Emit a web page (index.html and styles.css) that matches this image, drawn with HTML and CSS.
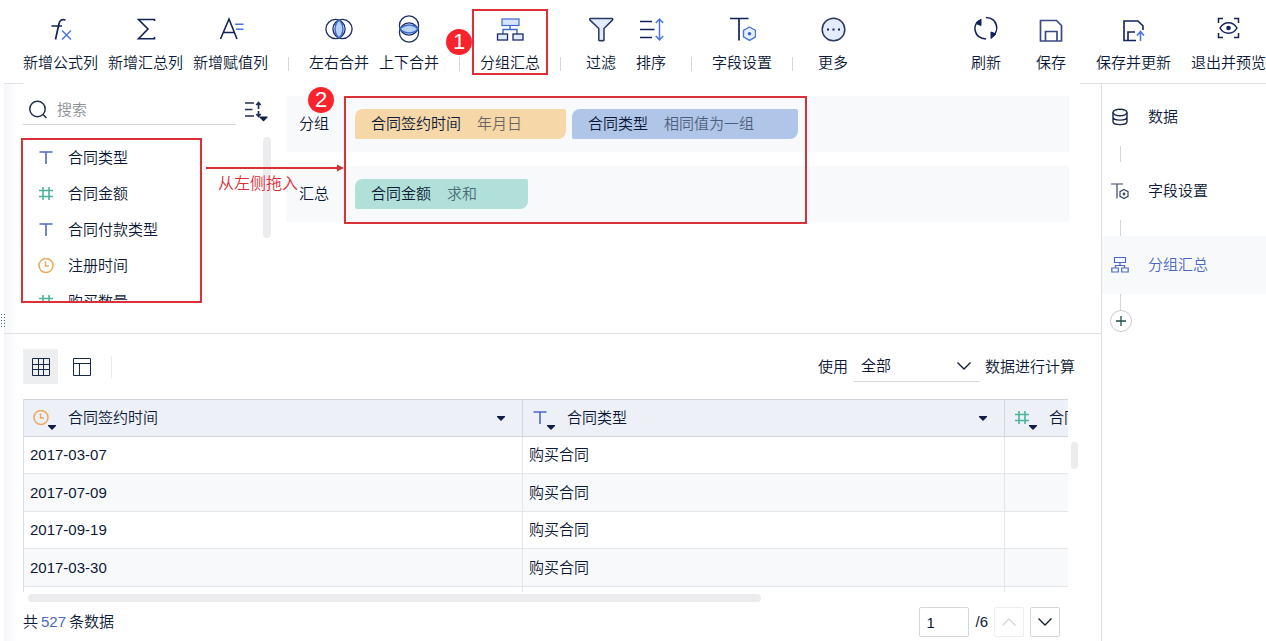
FILE: index.html
```html
<!DOCTYPE html>
<html lang="zh-CN">
<head>
  <meta charset="UTF-8" />
  <meta name="viewport" content="width=device-width, initial-scale=1.0"/>
  <title>分组汇总</title>
  <link rel="stylesheet" href="styles.css">
</head>
<body>
  <!-- Shared icons -->
  <svg class="sprite" aria-hidden="true">
    <symbol id="i-text" viewBox="0 0 16 16"><path d="M1.500 2h13M8 2v12" stroke="#4a69c4" stroke-width="1.600"/></symbol>
    <symbol id="i-num" viewBox="0 0 16 16"><path d="M1 4.500h14M1 10.500h14M5 1v13M11 1v13" stroke="#4bb39c" stroke-width="1.600"/></symbol>
    <symbol id="i-time" viewBox="0 0 16 16"><circle cx="8" cy="7.500" r="7" fill="none" stroke="#eba85c" stroke-width="1.500"/><path d="M7.500 3.500V8H11" fill="none" stroke="#eba85c" stroke-width="1.500"/></symbol>
    <symbol id="i-down" viewBox="0 0 16 16"><path d="M1.500 4.500L8 11l6.500-6.500" fill="none" stroke="currentColor" stroke-width="1.300"/></symbol>
    <symbol id="i-tri" viewBox="0 0 8 5"><path d="M0 0h8v1L4 5 0 1z" fill="#0f1f45"/></symbol>
  </svg>

  <header class="toolbar">
    <button class="tool">
      <svg class="icon" viewBox="0 0 28 28" fill="none"><path d="M18.500 5c-4-1.200-5.800 0-6.700 4.500L8.500 24.500M4.500 11h10.500" stroke="#12235a" stroke-width="1.700"/><path d="M15 15.500l9 9M24 15.500l-9 9" stroke="#4a76dc" stroke-width="1.500"/></svg>
      新增公式列
    </button>
    <button class="tool">
      <svg class="icon" viewBox="0 0 28 28" fill="none"><path d="M22.500 6V4.500H6.500l9.500 9.500-9.500 9.700h16V22" stroke="#12235a" stroke-width="1.600"/></svg>
      新增汇总列
    </button>
    <button class="tool">
      <svg class="icon" viewBox="0 0 28 28" fill="none"><path d="M3.500 24L12 4 20 24M6.500 17.500h11" stroke="#12235a" stroke-width="1.600"/><path d="M18 9.200h8.500M19 14.200h7.500" stroke="#4a76dc" stroke-width="1.500"/></svg>
      新增赋值列
    </button>
    <span class="sep"></span>
    <button class="tool">
      <svg class="icon" viewBox="0 0 28 28" fill="none"><circle cx="10.500" cy="14" r="9.600" stroke="#1b2c66" stroke-width="1.300"/><circle cx="17.500" cy="14" r="9.600" stroke="#1b2c66" stroke-width="1.300"/><path d="M14 5c5.300 5 5.300 13 0 18-5.300-5-5.300-13 0-18z" fill="#b5d3fa" stroke="#3c68cf" stroke-width="1.500"/></svg>
      左右合并
    </button>
    <button class="tool">
      <svg class="icon" viewBox="0 0 28 28" fill="none"><circle cx="14" cy="10.500" r="9.600" stroke="#1b2c66" stroke-width="1.300"/><circle cx="14" cy="17.500" r="9.600" stroke="#1b2c66" stroke-width="1.300"/><path d="M5 14c5-5.300 13-5.300 18 0-5 5.300-13 5.300-18 0z" fill="#b5d3fa" stroke="#3c68cf" stroke-width="1.500"/></svg>
      上下合并
    </button>
    <span class="sep"></span>
    <button class="tool marked">
      <svg class="icon" viewBox="0 0 28 28" fill="none"><path d="M14 10v5M7 19v-4.500h14V19" stroke="#3c68cf" stroke-width="1.400"/><rect x="6" y="4" width="17" height="6.500" fill="#d6e5fc" stroke="#3c68cf" stroke-width="1.200"/><rect x="1.500" y="19" width="10" height="6" fill="#e2ecfd" stroke="#1b2c66" stroke-width="1.300"/><rect x="17" y="19" width="10" height="6" fill="#e2ecfd" stroke="#1b2c66" stroke-width="1.300"/></svg>
      分组汇总
      <span class="num num-one">1</span>
    </button>
    <span class="sep"></span>
    <button class="tool">
      <svg class="icon" viewBox="0 0 28 28" fill="none"><path d="M3.500 3.500h21.500c.8 0 1 1 .4 1.600L17 13.500V25c0 1-5.200 1-5.200 0V13.500L3 5.100c-.6-.6-.3-1.600.5-1.600z" fill="#e2ecfd" stroke="#2b3763" stroke-width="1.500"/></svg>
      过滤
    </button>
    <button class="tool">
      <svg class="icon" viewBox="0 0 28 28" fill="none"><path d="M3 6.500h12M3 14.500h14.500M3 22.500h12" stroke="#12235a" stroke-width="1.600"/><path d="M22.500 4.500v20M18.800 8l3.700-4 3.700 4M18.800 21l3.700 4 3.700-4" stroke="#4a76dc" stroke-width="1.500"/></svg>
      排序
    </button>
    <span class="sep"></span>
    <button class="tool">
      <svg class="icon" viewBox="0 0 28 28" fill="none"><path d="M2 3.500h18.500M11 3.500v22" stroke="#12235a" stroke-width="1.700"/><path d="M21.500 12l6 3.400v6.500l-6 3.500-6-3.500v-6.500z" fill="#e8f0fe" stroke="#4a76dc" stroke-width="1.400"/><circle cx="21.500" cy="18.700" r="1.800" fill="#3c68cf"/></svg>
      字段设置
    </button>
    <span class="sep"></span>
    <button class="tool">
      <svg class="icon" viewBox="0 0 28 28" fill="none"><circle cx="14.500" cy="14.500" r="11.300" fill="#e2ecfd" stroke="#2b3763" stroke-width="1.500"/><path d="M8 13.500h2v2H8zM13.500 13.500h2v2h-2zM19 13.500h2v2h-2z" fill="#12235a"/></svg>
      更多
    </button>

    <div class="tools-right">
      <button class="tool short">
        <svg class="icon" viewBox="0 0 28 28" fill="none"><path d="M14 24C1.500 23.500 0 9.500 7.500 5.500M14 2.500c12 .5 13.500 14 6.500 18.500" stroke="#12235a" stroke-width="1.600"/><path d="M9 4v6.500L4 8.500zM19 23.500V17l5 2z" fill="#12235a" stroke="#12235a"/></svg>
        刷新
      </button>
      <button class="tool short">
        <svg class="icon" viewBox="0 0 28 28" fill="none"><path d="M3.500 5.500h16l5 5v15.500h-21zM8.500 26v-9.500h11.500V26" stroke="#3a4a80" stroke-width="1.700"/></svg>
        保存
      </button>
      <button class="tool">
        <svg class="icon" viewBox="0 0 28 28" fill="none"><path d="M17 25.500H5V6h14l5 5v4M9 25.500V17h7" stroke="#12235a" stroke-width="1.600"/><path d="M21.500 26V17M18 20.500l3.500-4 3.500 4" stroke="#4a76dc" stroke-width="1.600"/></svg>
        保存并更新
      </button>
      <button class="tool">
        <svg class="icon" viewBox="0 0 28 28" fill="none"><path d="M4.500 8V3.500H9M20 3.500h4.500V8M24.500 18v4.500H20M9 22.500H4.500V18M6 13c4-7 13-7 17 0-4 7-13 7-17 0z" stroke="#12235a" stroke-width="1.500"/><circle cx="14.500" cy="13" r="2.300" fill="#12235a"/></svg>
        退出并预览
      </button>
    </div>
  </header>

  <div class="page">
    <span class="grip"></span>
    <main class="main">
      <section class="config">
        <div class="fields">
          <div class="search-row">
            <label class="search">
              <svg width="20" height="20" viewBox="0 0 20 20" fill="none" stroke="#20304f" stroke-width="1.500"><circle cx="8.500" cy="9" r="7.700"/><path d="M14 14.500l3.500 3.500"/></svg>
              <input type="text" placeholder="搜索" aria-label="搜索">
            </label>
            <button class="sort" aria-label="排序">
              <svg width="24" height="24" viewBox="0 0 24 24" fill="none" stroke="#20304f" stroke-width="1.700"><path d="M1 4h9M1 10.500h7.500M1 17h9M14.500 4v6M14.500 12v5M12.300 6l2.200-2.500L16.700 6M12.300 15l2.200 2.500 2.200-2.500"/><path d="M15.500 17.500h8v1l-4 4-4-4z" fill="#0f1f45" stroke="none"/></svg>
            </button>
          </div>
          <ul class="field-list">
            <li><svg width="16" height="16"><use href="#i-text"/></svg>合同类型</li>
            <li><svg width="16" height="16"><use href="#i-num"/></svg>合同金额</li>
            <li><svg width="16" height="16"><use href="#i-text"/></svg>合同付款类型</li>
            <li><svg width="16" height="16"><use href="#i-time"/></svg>注册时间</li>
            <li><svg width="16" height="16"><use href="#i-num"/></svg>购买数量</li>
          </ul>
          <span class="field-bar"></span>
        </div>

        <div class="groups">
          <div class="group">
            <span class="group-name">分组</span>
            <div class="chip orange">合同签约时间<em>年月日</em></div>
            <div class="chip blue">合同类型<em>相同值为一组</em></div>
            <span class="num num-two">2</span>
          </div>
          <div class="group">
            <span class="group-name">汇总</span>
            <div class="chip green">合同金额<em>求和</em></div>
          </div>
          <span class="frame"></span>
        </div>
        <div class="hint">
          <svg width="138" height="8" viewBox="0 0 138 8"><path d="M0 4h132" stroke="#dc3038" stroke-width="2"/><path d="M131 0.500l7 3.500-7 3.500z" fill="#dc3038"/></svg>
          从左侧拖入
        </div>
      </section>

      <section class="data">
        <div class="data-tools">
          <button class="view active" aria-label="表格">
            <svg width="18" height="18" viewBox="0 0 18 18" fill="none" stroke="#182848"><path d="M.5 .5h17v17H.5zM.5 6.500h17M.5 11.500h17M6.500 .5v17M11.500 .5v17"/></svg>
          </button>
          <button class="view" aria-label="布局">
            <svg width="18" height="18" viewBox="0 0 18 18" fill="none" stroke="#182848"><path d="M.5 .5h17v17H.5zM.5 5.500h17M6.500 5.500v12"/></svg>
          </button>
          <span class="view-sep"></span>
          <div class="scope">
            <label for="scope">使用</label>
            <span class="select">
              <select id="scope"><option>全部</option></select>
              <svg width="16" height="16"><use href="#i-down"/></svg>
            </span>
            <span>数据进行计算</span>
          </div>
        </div>

        <div class="table-area">
          <div class="table-box">
            <table>
              <colgroup><col class="col-date"><col class="col-type"><col class="col-sum"></colgroup>
              <thead>
                <tr>
                  <th><div class="head"><span class="type"><svg width="16" height="16"><use href="#i-time"/></svg><svg class="tri" width="8" height="5"><use href="#i-tri"/></svg></span>合同签约时间<svg class="menu" width="8" height="5"><use href="#i-tri"/></svg></div></th>
                  <th><div class="head"><span class="type"><svg width="16" height="16"><use href="#i-text"/></svg><svg class="tri" width="8" height="5"><use href="#i-tri"/></svg></span>合同类型<svg class="menu" width="8" height="5"><use href="#i-tri"/></svg></div></th>
                  <th><div class="head"><span class="type"><svg width="16" height="16"><use href="#i-num"/></svg><svg class="tri" width="8" height="5"><use href="#i-tri"/></svg></span>合同金额</div></th>
                </tr>
              </thead>
              <tbody>
                <tr><td>2017-03-07</td><td>购买合同</td><td></td></tr>
                <tr><td>2017-07-09</td><td>购买合同</td><td></td></tr>
                <tr><td>2017-09-19</td><td>购买合同</td><td></td></tr>
                <tr><td>2017-03-30</td><td>购买合同</td><td></td></tr>
                <tr><td></td><td></td><td></td></tr>
              </tbody>
            </table>
          </div>
          <span class="bar-y"></span>
        </div>
        <div class="bar-x"></div>

        <footer class="pager">
          <span class="total">共<b>527</b>条数据</span>
          <input type="text" value="1" aria-label="页码">
          <span class="pages">/6</span>
          <button disabled aria-label="上一页"><svg class="flip" width="16" height="16"><use href="#i-down"/></svg></button>
          <button aria-label="下一页"><svg width="16" height="16"><use href="#i-down"/></svg></button>
        </footer>
      </section>
    </main>

    <aside class="steps">
      <a class="step" href="#">
        <svg width="18" height="18" viewBox="0 0 18 18" fill="none" stroke="#182848" stroke-width="1.400"><ellipse cx="9" cy="4.500" rx="7" ry="3.200"/><path d="M2 4.500v9c0 4.200 14 4.200 14 0v-9M2 9c0 4.200 14 4.200 14 0"/></svg>
        数据
      </a>
      <span class="link"></span>
      <a class="step" href="#">
        <svg width="18" height="18" viewBox="0 0 18 18" fill="none" stroke="#3a4664" stroke-width="1.200"><path d="M0 2h12M6 2v14.500M13 7.500l4 2.200v4.600l-4 2.200-4-2.200V9.700z"/><circle cx="13" cy="12" r=".8" fill="#182848"/></svg>
        字段设置
      </a>
      <span class="link"></span>
      <a class="step current" href="#">
        <svg width="18" height="18" viewBox="0 0 18 18" fill="none" stroke="#4a69c4" stroke-width="1.200"><path d="M3.500 1.500h11v5h-11zM9 6.500v3M4.500 12V9.500h9V12M.8 12h6.500v4H.8zM10.700 12h6.500v4h-6.500z"/></svg>
        分组汇总
      </a>
      <span class="link"></span>
      <button class="add" aria-label="添加"><svg width="12" height="12" viewBox="0 0 12 12"><path d="M1 6h10M6 1v10" stroke="#1f4a4c" stroke-width="1.300"/></svg></button>
    </aside>
  </div>
</body>
</html>
```
FILE: styles.css
```css
* {
  box-sizing: border-box;
}
body {
  margin: 0;
  min-height: 100vh;
  display: flex;
  flex-direction: column;
  font-family: "Liberation Sans", "Noto Sans CJK SC", sans-serif;
  font-size: 15px;
  font-weight: 350;
  line-height: 20px;
  color: #0c1936;
  background: #fff;
}
button, input, select {
  font: inherit;
  color: inherit;
  margin: 0;
  padding: 0;
  border: none;
  background: none;
}
svg {
  flex: none;
}
.sprite {
  position: absolute;
  width: 0;
  height: 0;
}

/* toolbar */
.toolbar {
  display: flex;
  gap: 10px;
  height: 84px;
  padding: 9px 0 9px 23px;
  background:
    linear-gradient(#dfe1e4, #dfe1e4) right bottom / 186px 1px no-repeat,
    linear-gradient(#dfe1e4, #dfe1e4) 4px bottom / 19px 1px no-repeat;
}
.tool {
  position: relative;
  display: flex;
  flex-direction: column;
  align-items: center;
  gap: 10px;
  min-width: 40px;
  height: 66px;
  padding-top: 6px;
  white-space: nowrap;
}
.icon {
  width: 28px;
  height: 28px;
}
.sep {
  width: 1px;
  height: 14px;
  margin: 48px 10px 0;
  background: #d4d6da;
}
.tools-right {
  display: flex;
  gap: 20px;
  margin-left: auto;
}
.short {
  margin-right: 5px;
}
.marked {
  outline: 2px solid #dc3038;
  outline-offset: -2px;
  padding-left: 8px;
  padding-right: 8px;
  margin: 0 -8px;
}
.num {
  position: absolute;
  width: 26px;
  height: 26px;
  border-radius: 50%;
  background: #f8232c;
  color: #fff;
  font-size: 22px;
  font-weight: 400;
  line-height: 26px;
  text-align: center;
}
.num-one {
  left: -26px;
  top: 20px;
}
.num-two {
  left: 22px;
  top: -9px;
}

.page {
  position: relative;
  display: flex;
  flex: 1;
}
.grip {
  position: absolute;
  left: 0;
  top: 229px;
  width: 5px;
  height: 15px;
  background: radial-gradient(circle, #3f6a8c 1px, transparent 1px) 0 0 / 3px 3px;
}
.main {
  flex: 1;
  min-width: 0;
  margin-left: 4px;
  background: linear-gradient(to right, #f5f6fa, #fff 14px);
}

/* group config */
.config {
  position: relative;
  display: flex;
  gap: 15px;
  height: 250px;
  padding: 12px 32px 0 19px;
  border-bottom: 1px solid #dfe1e4;
}
.fields {
  position: relative;
  width: 248px;
}
.search-row {
  display: flex;
  gap: 8px;
  height: 29px;
}
.search {
  display: flex;
  align-items: center;
  gap: 8px;
  width: 213px;
  padding-left: 6px;
  border-bottom: 1px solid #d4d6da;
}
.search input {
  width: 160px;
  outline: none;
}
.search input::placeholder {
  color: #8d9096;
  opacity: 1;
}
.sort {
  display: flex;
  padding-top: 3px;
}
.field-list {
  width: 181px;
  height: 165px;
  margin: 13px 0 0 -2px;
  padding: 0;
  overflow: hidden;
  list-style: none;
  border: 2px solid #dc3038;
}
.field-list li {
  display: flex;
  align-items: center;
  gap: 14px;
  height: 36px;
  padding-left: 15px;
}
.field-bar {
  position: absolute;
  right: 0;
  top: 41px;
  width: 8px;
  height: 101px;
  border-radius: 4px;
  background: #ececee;
}
.groups {
  position: relative;
  flex: 1;
  display: flex;
  flex-direction: column;
  gap: 14px;
}
.group {
  position: relative;
  display: flex;
  align-items: center;
  gap: 6px;
  height: 56px;
  padding-left: 13px;
  background: #f8f9fb;
}
.group-name {
  width: 50px;
}
.chip {
  height: 30px;
  padding-left: 16px;
  line-height: 30px;
  border-radius: 8px 2px 8px 2px;
}
.chip em {
  margin-left: 16px;
  font-style: normal;
  opacity: .6;
}
.orange {
  width: 211px;
  background: #f6d7a8;
}
.blue {
  width: 226px;
  background: #b0c6e8;
}
.green {
  width: 173px;
  background: #b0e0d8;
}
.frame {
  position: absolute;
  left: 58px;
  top: 0;
  width: 463px;
  height: 128px;
  border: 2px solid #dc3038;
}
.hint {
  position: absolute;
  left: 202px;
  top: 80px;
  padding-left: 12px;
  font-size: 16px;
  line-height: 24px;
  color: #dc3038;
}
.hint svg {
  display: block;
  margin-left: -12px;
}

/* data preview */
.data {
  padding: 15px 0 0 19px;
}
.data-tools {
  display: flex;
  align-items: center;
  gap: 6px;
  height: 35px;
  padding-right: 26px;
}
.view {
  display: flex;
  align-items: center;
  justify-content: center;
  width: 35px;
  height: 35px;
}
.active {
  background: #eceeef;
}
.view-sep {
  width: 1px;
  height: 22px;
  margin-left: 6px;
  background: #e8eaec;
}
.scope {
  display: flex;
  align-items: center;
  gap: 6px;
  margin-left: auto;
}
.select {
  position: relative;
  display: flex;
  width: 125px;
  height: 31px;
  border-bottom: 1px solid #d4d6da;
}
.select select {
  width: 100%;
  padding-left: 7px;
  appearance: none;
}
.select svg {
  position: absolute;
  right: 7px;
  top: 7px;
  pointer-events: none;
}
.table-area {
  position: relative;
  margin: 15px 33px 0 0;
}
.table-box {
  height: 193px;
  overflow: hidden;
}
table {
  width: 1464px;
  table-layout: fixed;
  border-collapse: separate;
  border-spacing: 0;
  border-left: 1px solid #dcdfe5;
}
.col-date {
  width: 499px;
}
.col-type, .col-sum {
  width: 482px;
}
th, td {
  padding: 0 6px;
  text-align: left;
  font-weight: inherit;
  border-right: 1px solid #e2e5e9;
  border-bottom: 1px solid #e2e5e9;
}
th {
  height: 38px;
  padding: 0 17px 0 9px;
  background: #edf0f7;
  border-top: 1px solid #dcdfe5;
  border-color: #d2d5dc;
}
td {
  height: 37px;
}
tr:nth-child(even) td {
  height: 38px;
  background: #f8f9fb;
}
.head {
  display: flex;
  align-items: center;
}
.type {
  position: relative;
  display: flex;
  width: 35px;
}
.tri {
  position: absolute;
  left: 15px;
  top: 15px;
}
.menu {
  margin-left: auto;
}
.bar-y {
  position: absolute;
  right: -10px;
  top: 43px;
  width: 7px;
  height: 27px;
  border-radius: 4px;
  background: #ececee;
}
.bar-x {
  width: 68%;
  height: 8px;
  margin: 2px 0 0 5px;
  border-radius: 4px;
  background: #ececee;
}

.pager {
  display: flex;
  align-items: center;
  gap: 6px;
  height: 30px;
  margin-top: 5px;
  padding-right: 41px;
}
.total {
  margin-right: auto;
}
.total b {
  margin: 0 3px;
  font-weight: inherit;
  color: #4a69c4;
}
.pager input {
  width: 50px;
  height: 30px;
  padding-left: 6px;
  border: 1px solid #d4d6da;
  border-radius: 2px;
}
.pager button {
  display: flex;
  align-items: center;
  justify-content: center;
  width: 30px;
  height: 30px;
  border: 1px solid #d4d6da;
  border-radius: 2px;
}
.pager button:disabled {
  color: #d4d6da;
  border-color: #eceeef;
}
.flip {
  transform: rotate(180deg);
}

/* steps */
.steps {
  width: 165px;
  padding-top: 4px;
  border-left: 1px solid #dfe1e4;
}
.step {
  display: flex;
  align-items: center;
  gap: 19px;
  height: 58px;
  padding-left: 9px;
  color: inherit;
  text-decoration: none;
}
.current {
  color: #4a69c4;
  background: #f8f9fb;
}
.link {
  display: block;
  width: 1px;
  height: 16px;
  margin-left: 18px;
  background: #d4d6da;
}
.add {
  display: flex;
  align-items: center;
  justify-content: center;
  width: 22px;
  height: 22px;
  margin-left: 8px;
  border: 1px solid #c8cbd0;
  border-radius: 50%;
}
```
